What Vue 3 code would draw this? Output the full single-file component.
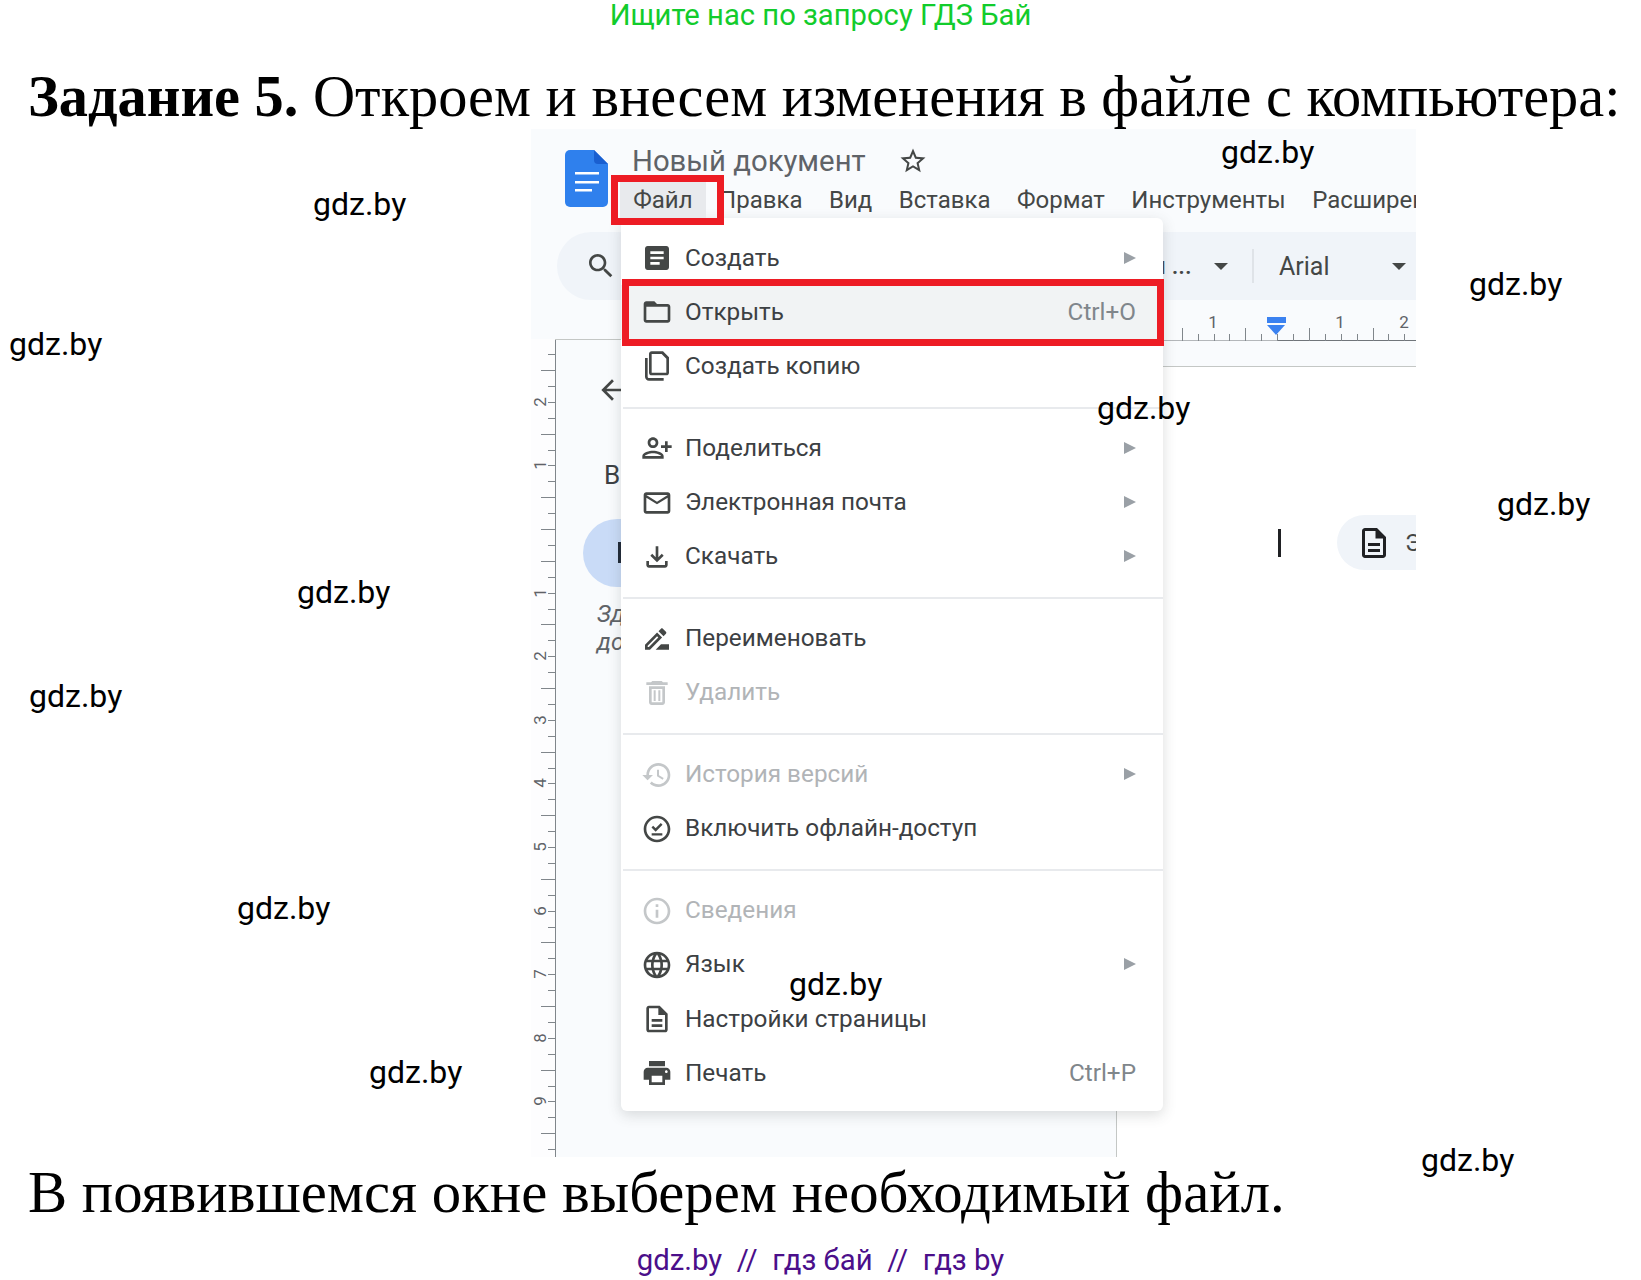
<template>
  <div class="page">
    <div class="promo">Ищите нас по запросу ГДЗ Бай</div>
    <h1 class="heading"><b>Задание 5.</b> Откроем и внесем изменения в файле с компьютера:</h1>

    <section class="shot">
      <header class="appbar">
        <svg class="docicon" viewBox="0 0 43 57">
          <path fill="#2f80ed" d="M5 0h24l14 14v38a5 5 0 0 1-5 5H5a5 5 0 0 1-5-5V5a5 5 0 0 1 5-5z" />
          <path fill="#1a5fd0" d="M29 0l14 14H33a4 4 0 0 1-4-4z" />
          <path fill="#fff" d="M10 22h24v2.500H10zM10 31h24v2.500H10zM10 39h17v2.500H10z" />
        </svg>
        <div class="titles">
          <div class="titleline">
            <span class="doctitle">Новый документ</span>
            <svg class="star" viewBox="0 0 24 24"><path :d="icons.star" /></svg>
          </div>
          <nav class="menubar">
            <span v-for="(m, i) in menus" :key="m" class="mitem" :class="{ active: i === 0 }">{{ m }}</span>
          </nav>
        </div>
      </header>

      <div class="toolbar">
        <svg class="searchicon" viewBox="0 0 24 24"><path :d="icons.search" /></svg>
        <div class="tooltail">
          <span class="stylename">н ...</span>
          <i class="caret"></i>
          <i class="tsep"></i>
          <span class="fontname">Arial</span>
          <i class="caret"></i>
        </div>
      </div>

      <div class="work">
        <div class="vruler">
          <template v-for="t in vticks" :key="t.k">
            <i class="vt" :style="{ top: t.top + 'px', width: t.len + 'px' }"></i>
            <span v-if="t.label" class="vn" :style="{ top: t.top + 'px' }">{{ t.label }}</span>
          </template>
        </div>
        <div class="canvas">
          <div class="hruler">
            <i class="cornerline"></i>
            <i class="hbase"></i>
            <i class="hline"></i>
            <i v-for="t in hticks" :key="t.x" class="ht" :style="{ left: t.x + 'px', height: t.len + 'px' }"></i>
            <span v-for="n in hnums" :key="n.x" class="hn" :style="{ left: n.x + 'px' }">{{ n.t }}</span>
            <span class="marker"><i></i><b></b></span>
          </div>
          <div class="doc">
            <svg class="backarrow" viewBox="0 0 24 24"><path :d="icons.back" /></svg>
            <div class="docv">В</div>
            <div class="docrow">
              <div class="bluepill"><i></i></div>
              <i class="cursor"></i>
              <div class="chip">
                <svg viewBox="0 0 24 24"><path :d="icons.page" /></svg>
                <span>Э</span>
              </div>
            </div>
            <div class="hint">Зд<br />до</div>
          </div>
        </div>
      </div>

      <div class="menu">
        <template v-for="(sec, si) in sections" :key="si">
          <div v-if="si > 0" class="divider"></div>
          <div
            v-for="r in sec"
            :key="r.t"
            class="row"
            :class="{ off: r.off, open: r.t === 'Открыть' }"
          >
            <svg class="ricon" viewBox="0 0 24 24">
              <g :transform="r.flip ? 'translate(24 0) scale(-1 1)' : null">
                <path :d="icons[r.i]" fill-rule="evenodd" />
              </g>
              <path v-if="r.i === 'offline'" class="offcheck" d="M8.500 10.200l2.500 2.500 4.500-4.500M8 16h8" />
            </svg>
            <span class="rtext">{{ r.t }}</span>
            <span v-if="r.key" class="rkey">{{ r.key }}</span>
            <i v-if="r.sub" class="rsub"></i>
          </div>
        </template>
      </div>
    </section>

    <p class="closing">В появившемся окне выберем необходимый файл.</p>
    <div class="footer">gdz.by&nbsp; //&nbsp; гдз бай&nbsp; //&nbsp; гдз by</div>

    <span
      v-for="w in marks"
      :key="w.x"
      class="mark"
      :style="{ left: w.x + 'px', top: w.y + 'px' }"
    >gdz.by</span>
  </div>
</template>

<script setup>
const icons = {
  star: 'M22 9.24l-7.19-.62L12 2 9.19 8.63 2 9.24l5.46 4.73L5.82 21 12 17.27 18.18 21l-1.63-7.03L22 9.24zM12 15.4l-3.76 2.27 1-4.28-3.32-2.88 4.38-.38L12 6.1l1.71 4.04 4.38.38-3.32 2.88 1 4.28L12 15.4z',
  search: 'M15.5 14h-.79l-.28-.27C15.41 12.59 16 11.11 16 9.5 16 5.91 13.09 3 9.5 3S3 5.91 3 9.5 5.91 16 9.5 16c1.61 0 3.09-.59 4.23-1.57l.27.28v.79l5 4.99L20.49 19l-4.99-5zm-6 0C7.01 14 5 11.99 5 9.5S7.01 5 9.5 5 14 7.01 14 9.5 11.99 14 9.5 14z',
  back: 'M20 11H7.83l5.59-5.59L12 4l-8 8 8 8 1.41-1.41L7.83 13H20v-2z',
  article: 'M19 3H5c-1.1 0-2 .9-2 2v14c0 1.1.9 2 2 2h14c1.1 0 2-.9 2-2V5c0-1.1-.9-2-2-2zm-5 14H7v-2h7v2zm3-4H7v-2h10v2zm0-4H7V7h10v2z',
  folder: 'M20 6h-8l-2-2H4c-1.1 0-1.99.9-1.99 2L2 18c0 1.1.9 2 2 2h16c1.1 0 2-.9 2-2V8c0-1.1-.9-2-2-2zm0 12H4V8h16v10z',
  copy: 'M8 1h8.500L21 5.500V17c0 1.100-.9 2-2 2H8c-1.100 0-2-.9-2-2V3c0-1.100.9-2 2-2zM8 3v14h11V6.500L15.500 3zM3 6h2v14c0 .55.45 1 1 1h11v2H6c-1.650 0-3-1.350-3-3z',
  person: 'M15 12c2.21 0 4-1.79 4-4s-1.79-4-4-4-4 1.79-4 4 1.79 4 4 4zm0-6c1.1 0 2 .9 2 2s-.9 2-2 2-2-.9-2-2 .9-2 2-2zm0 8c-2.67 0-8 1.34-8 4v2h16v-2c0-2.66-5.33-4-8-4zm-6 4c.22-.72 3.31-2 6-2 2.7 0 5.8 1.29 6 2H9zm-3-3v-3h3v-2H6V7H4v3H1v2h3v3h2z',
  mail: 'M22 6c0-1.1-.9-2-2-2H4c-1.1 0-2 .9-2 2v12c0 1.1.9 2 2 2h16c1.1 0 2-.9 2-2V6zm-2 0l-8 5-8-5h16zm0 12H4V8l8 5 8-5v10z',
  download: 'M18 15v3H6v-3H4v3c0 1.1.9 2 2 2h12c1.1 0 2-.9 2-2v-3h-2zm-1-4l-1.41-1.41L13 12.17V4h-2v8.17L8.41 9.59 7 11l5 5 5-5z',
  rename: 'M15 16l-4 4h10v-4zM12.06 7.19L3 16.25V20h3.75l9.06-9.06-3.75-3.75zM5.92 18H5v-.92l7.06-7.06.92.92L5.920 18zM18.71 8.04c.39-.39.39-1.02 0-1.41l-2.34-2.34c-.2-.2-.45-.29-.71-.29s-.51.1-.7.29l-1.83 1.83 3.75 3.75 1.83-1.83z',
  trash: 'M15.500 3h-7l-1 1H4v2h16V4h-3.500zM6 7v12c0 1.100.9 2 2 2h8c1.100 0 2-.9 2-2V7zm2 2h8v10H8zm1.500 1h1.500v8H9.500zm3.500 0h1.500v8H13z',
  history: 'M13 3c-4.97 0-9 4.03-9 9H1l3.89 3.89.07.14L9 12H6c0-3.87 3.13-7 7-7s7 3.13 7 7-3.13 7-7 7c-1.93 0-3.68-.79-4.94-2.06l-1.42 1.42C8.27 19.99 10.51 21 13 21c4.97 0 9-4.03 9-9s-4.03-9-9-9zm-1 5v5l4.28 2.54.72-1.21-3.5-2.08V8H12z',
  offline: 'M12 2C6.480 2 2 6.480 2 12s4.480 10 10 10 10-4.480 10-10S17.520 2 12 2zm0 18c-4.410 0-8-3.590-8-8s3.590-8 8-8 8 3.590 8 8-3.590 8-8 8z',
  info: 'M11 7h2v2h-2zm0 4h2v6h-2zm1-9C6.48 2 2 6.48 2 12s4.48 10 10 10 10-4.48 10-10S17.52 2 12 2zm0 18c-4.41 0-8-3.59-8-8s3.59-8 8-8 8 3.59 8 8-3.59 8-8 8z',
  globe: 'M11.99 2C6.47 2 2 6.48 2 12s4.47 10 9.99 10C17.52 22 22 17.52 22 12S17.52 2 11.99 2zm6.93 6h-2.95c-.32-1.25-.78-2.45-1.38-3.56 1.84.63 3.37 1.91 4.33 3.56zM12 4.04c.83 1.2 1.48 2.53 1.91 3.96h-3.82c.43-1.43 1.08-2.76 1.91-3.96zM4.26 14C4.1 13.36 4 12.69 4 12s.1-1.36.26-2h3.38c-.08.66-.14 1.32-.14 2s.06 1.34.14 2H4.26zm.82 2h2.95c.32 1.25.78 2.45 1.38 3.56-1.84-.63-3.37-1.9-4.33-3.56zm2.95-8H5.08c.96-1.66 2.49-2.93 4.33-3.56C8.81 5.55 8.35 6.75 8.03 8zM12 19.96c-.83-1.2-1.48-2.53-1.91-3.96h3.82c-.43 1.43-1.08 2.76-1.91 3.96zM14.34 14H9.66c-.09-.66-.16-1.32-.16-2s.07-1.35.16-2h4.68c.09.65.16 1.32.16 2s-.07 1.34-.16 2zm.25 5.56c.6-1.11 1.06-2.31 1.38-3.56h2.95c-.96 1.65-2.49 2.93-4.33 3.56zM16.36 14c.08-.66.14-1.32.14-2s-.06-1.34-.14-2h3.38c.16.64.26 1.31.26 2s-.1 1.36-.26 2h-3.38z',
  page: 'M8 16h8v2H8zm0-4h8v2H8zm6-10H6c-1.1 0-2 .9-2 2v16c0 1.1.89 2 1.99 2H18c1.1 0 2-.9 2-2V8l-6-6zm4 18H6V4h7v5h5v11z',
  print: 'M19 8H5c-1.66 0-3 1.34-3 3v6h4v4h12v-4h4v-6c0-1.66-1.34-3-3-3zm-3 11H8v-5h8v5zm3-7c-.55 0-1-.45-1-1s.45-1 1-1 1 .45 1 1-.45 1-1 1zm-1-9H6v4h12V3z',
}

const menus = ['Файл', 'Правка', 'Вид', 'Вставка', 'Формат', 'Инструменты', 'Расширения']

const sections = [
  [
    { t: 'Создать', i: 'article', sub: true },
    { t: 'Открыть', i: 'folder', key: 'Ctrl+O' },
    { t: 'Создать копию', i: 'copy' },
  ],
  [
    { t: 'Поделиться', i: 'person', sub: true, flip: true },
    { t: 'Электронная почта', i: 'mail', sub: true },
    { t: 'Скачать', i: 'download', sub: true },
  ],
  [
    { t: 'Переименовать', i: 'rename' },
    { t: 'Удалить', i: 'trash', off: true },
  ],
  [
    { t: 'История версий', i: 'history', sub: true, off: true },
    { t: 'Включить офлайн-доступ', i: 'offline' },
  ],
  [
    { t: 'Сведения', i: 'info', off: true },
    { t: 'Язык', i: 'globe', sub: true },
    { t: 'Настройки страницы', i: 'page' },
    { t: 'Печать', i: 'print', key: 'Ctrl+P' },
  ],
]

const vticks = []
for (let k = -11; k <= 39; k++) {
  const m = ((k % 4) + 4) % 4
  vticks.push({
    k,
    top: 529 + k * 15.9 - 339,
    len: m === 2 || k === 0 ? 14 : 7,
    label: m === 0 && k !== 0 ? String(Math.abs(k) / 4) : '',
  })
}

const hticks = []
for (let i = 0; i < 16; i++) {
  hticks.push({ x: 1181.7 + i * 15.9 - 556, len: i % 4 === 0 ? 13 : 7 })
}
const hnums = [
  { x: 1213 - 556, t: '1' },
  { x: 1340 - 556, t: '1' },
  { x: 1404 - 556, t: '2' },
]

const marks = [
  { x: 1221, y: 152 },
  { x: 313, y: 204 },
  { x: 1469, y: 284 },
  { x: 9, y: 344 },
  { x: 1097, y: 408 },
  { x: 1497, y: 504 },
  { x: 297, y: 592 },
  { x: 29, y: 696 },
  { x: 237, y: 908 },
  { x: 789, y: 984 },
  { x: 369, y: 1072 },
  { x: 1421, y: 1160 },
]
</script>

<style scoped>
.page {
  position: relative;
  width: 1641px;
  height: 1280px;
  overflow: hidden;
  background: #fff;
  font-family: Roboto, "Noto Sans", sans-serif;
}
.promo {
  height: 30px;
  line-height: 30px;
  text-align: center;
  color: #12cc2c;
  font-size: 29.200px;
  white-space: nowrap;
}
.heading {
  height: 99px;
  box-sizing: border-box;
  margin: 0;
  padding: 19px 0 0 28px;
  font-family: "Liberation Serif", serif;
  font-weight: 400;
  font-size: 58.400px;
  line-height: 96px;
  color: #000;
  white-space: nowrap;
}
.shot {
  position: relative;
  width: 885px;
  height: 1028px;
  margin-left: 531px;
  overflow: hidden;
  background: #f9fbfd;
}
.appbar {
  display: flex;
  height: 103px;
  padding: 21px 0 0 34px;
  box-sizing: border-box;
}
.docicon {
  width: 43px;
  height: 57px;
  flex: none;
}
.titles {
  margin-left: 12px;
  min-width: 0;
}
.titleline {
  display: flex;
  align-items: center;
  height: 22px;
  padding-left: 12px;
}
.doctitle {
  font-size: 29.300px;
  color: #5f6368;
  white-space: nowrap;
}
.star {
  width: 30px;
  height: 30px;
  margin-left: 32px;
  fill: #444746;
}
.menubar {
  display: flex;
  margin-top: 10px;
}
.mitem {
  position: relative;
  padding: 0 13.250px;
  height: 36px;
  line-height: 36px;
  font-size: 24px;
  color: #444746;
  white-space: nowrap;
}
.mitem.active {
  background: #e8eaed;
  z-index: 5;
}
.mitem.active::after {
  content: "";
  position: absolute;
  left: -9px;
  right: -18px;
  top: -7px;
  bottom: -7px;
  border: 7px solid #ed1c24;
}
.toolbar {
  display: flex;
  align-items: center;
  height: 68px;
  margin-left: 26px;
  margin-right: -40px;
  border-radius: 34px 0 0 34px;
  background: #f0f4f9;
}
.searchicon {
  width: 32px;
  height: 32px;
  margin-left: 28px;
  fill: #444746;
}
.tooltail {
  display: flex;
  align-items: center;
  margin-left: 535px;
  color: #444746;
}
.stylename {
  width: 62px;
  font-size: 24px;
  font-weight: 500;
  white-space: pre;
}
.caret {
  width: 0;
  height: 0;
  border: 7px solid transparent;
  border-top: 7px solid #444746;
  border-bottom: 0;
}
.tsep {
  width: 2px;
  height: 34px;
  margin: 0 25px 0 24px;
  background: #dfe3e8;
}
.fontname {
  width: 113px;
  font-size: 25px;
}
.work {
  display: flex;
  min-height: 0;
}
.vruler {
  position: relative;
  flex: none;
  width: 24px;
  height: 818px;
  margin-top: 39px;
  border-right: 1px solid #80868b;
  background: #fdfdfe;
}
.vt {
  position: absolute;
  right: 0;
  height: 1px;
  background: #80868b;
}
.vn {
  position: absolute;
  left: 3px;
  width: 12px;
  height: 16px;
  margin-top: -8px;
  font-size: 17px;
  line-height: 16px;
  text-align: center;
  color: #5f6368;
  transform: rotate(-90deg);
}
.canvas {
  position: relative;
  flex: 1;
  min-width: 0;
  background: #fff;
}
.cornerline {
  position: absolute;
  left: -1px;
  top: 39px;
  width: 80px;
  height: 1px;
  background: #c4c7c5;
}
.hruler {
  position: relative;
  height: 67px;
  background: #f9fbfd;
}
.hbase {
  position: absolute;
  left: 600px;
  right: 0;
  top: 40px;
  height: 1px;
  background: linear-gradient(to right, #b4b7ba 121px, #70757a 121px);
}
.hline {
  position: absolute;
  left: 600px;
  right: 0;
  bottom: 0;
  height: 1px;
  background: #c4c7c5;
}
.ht {
  position: absolute;
  bottom: 26px;
  width: 1px;
  background: #80868b;
}
.hn {
  position: absolute;
  top: 14px;
  width: 12px;
  margin-left: -6px;
  font-size: 17px;
  line-height: 16px;
  text-align: center;
  color: #5f6368;
}
.marker {
  position: absolute;
  left: 711px;
  top: 17px;
  width: 19px;
}
.marker i {
  display: block;
  height: 6px;
  background: #3b82f0;
}
.marker b {
  display: block;
  width: 0;
  margin: 2px 0 0 0;
  border-left: 9.500px solid transparent;
  border-right: 9.500px solid transparent;
  border-top: 10px solid #3b82f0;
}
.doc {
  width: 561px;
  height: 800px;
  box-sizing: border-box;
  padding-top: 7px;
  border-right: 1px solid #c4c7c5;
  background: #f9fbfd;
}
.backarrow {
  display: block;
  width: 32px;
  height: 32px;
  margin-left: 40px;
  fill: #444746;
}
.docv {
  margin: 54px 0 0 48px;
  font-size: 26px;
  line-height: 30px;
  color: #3c4043;
}
.docrow {
  display: flex;
  align-items: flex-start;
  width: 860px;
  margin-top: 25px;
  overflow: hidden;
}
.bluepill {
  flex: none;
  width: 100px;
  height: 68px;
  margin: 4px 0 0 27px;
  border-radius: 34px;
  background: #c9dbf7;
  position: relative;
}
.bluepill i {
  position: absolute;
  left: 35px;
  top: 23px;
  width: 3px;
  height: 21px;
  background: #1f2937;
}
.cursor {
  flex: none;
  width: 3px;
  height: 28px;
  margin: 14px 0 0 595px;
  background: #202124;
}
.chip {
  flex: none;
  display: flex;
  align-items: center;
  width: 140px;
  height: 55px;
  margin-left: 56px;
  padding-left: 19px;
  box-sizing: border-box;
  border-radius: 28px;
  background: #f0f4f9;
}
.chip svg {
  width: 36px;
  height: 36px;
  fill: #202124;
}
.chip span {
  margin-left: 13px;
  font-size: 24px;
  color: #444746;
}
.hint {
  margin: 13px 0 0 41px;
  font-size: 24px;
  line-height: 28px;
  font-style: italic;
  color: #5f6368;
}
.menu {
  position: absolute;
  left: 90px;
  top: 89px;
  z-index: 3;
  width: 542px;
  height: 893px;
  box-sizing: border-box;
  padding-top: 13px;
  border-radius: 6px;
  background: #fff;
  box-shadow: 0 4px 14px rgba(60, 64, 67, 0.18);
}
.divider {
  height: 2px;
  margin: 13px 0 12.700px 2px;
  background: #e8eaed;
}
.row {
  position: relative;
  display: flex;
  align-items: center;
  height: 54.200px;
  padding: 0 27px 0 20px;
  font-size: 24.300px;
  color: #3c4043;
}
.ricon {
  flex: none;
  width: 32px;
  height: 32px;
  margin-right: 12px;
  fill: #444746;
}
.offcheck {
  fill: none;
  stroke: #444746;
  stroke-width: 1.800;
}
.rtext {
  flex: 1;
  margin-top: -2px;
  white-space: nowrap;
}
.rkey {
  margin-top: -2px;
  color: #80868b;
}
.rsub {
  width: 0;
  height: 0;
  margin-top: -1px;
  border-left: 12px solid #9aa0a6;
  border-top: 6px solid transparent;
  border-bottom: 6px solid transparent;
}
.row.off {
  color: #b1b4b7;
}
.row.off .ricon {
  fill: #c4c7c9;
}
.row.open {
  background: #f1f3f4;
}
.row.open::after {
  content: "";
  position: absolute;
  left: 1px;
  right: -1px;
  top: -6px;
  bottom: -7px;
  border: 7px solid #ed1c24;
}
.closing {
  height: 88px;
  box-sizing: border-box;
  margin: 0;
  padding-left: 28px;
  font-family: "Liberation Serif", serif;
  font-size: 58.750px;
  line-height: 72px;
  color: #000;
  white-space: nowrap;
}
.footer {
  text-align: center;
  font-size: 29.300px;
  line-height: 30px;
  color: #4b0f8a;
  white-space: nowrap;
}
.mark {
  position: absolute;
  z-index: 10;
  transform: translateY(-50%);
  font-size: 32px;
  line-height: 40px;
  color: #000;
}
</style>
